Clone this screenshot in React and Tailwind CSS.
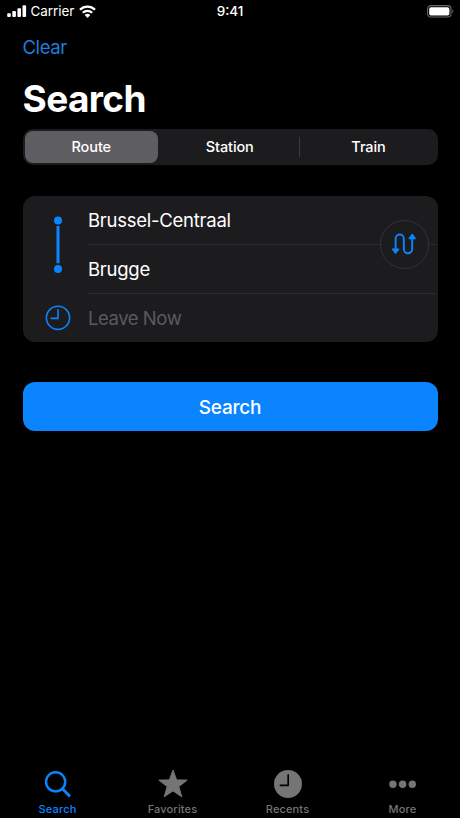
import { useState } from 'react'

const SEGMENTS = ['Route', 'Station', 'Train']

const SignalIcon = () => (
  <svg className="w-5 h-3" viewBox="0 0 20 12" fill="currentColor">
    <rect x="0.2" y="8.2" width="3.6" height="3.8" rx="0.9" />
    <rect x="5.3" y="6" width="3.6" height="6" rx="0.9" />
    <rect x="10.4" y="3.2" width="3.6" height="8.8" rx="0.9" />
    <rect x="15.5" y="0.2" width="3.6" height="11.8" rx="0.9" />
  </svg>
)

const WifiIcon = () => (
  <svg className="w-[17px] h-[13px]" viewBox="0 0 17 13" fill="none" stroke="currentColor" strokeWidth="2.3">
    <path d="M1 4.7a10.6 10.6 0 0 1 15 0" />
    <path d="M3.8 7.8a6.65 6.65 0 0 1 9.4 0" />
    <path d="M8.5 12.9L5.7 10a3.9 3.9 0 0 1 5.6 0z" fill="currentColor" stroke="none" />
  </svg>
)

const BatteryIcon = () => (
  <svg className="w-[27px] h-[13px]" viewBox="0 0 27 13" fill="none">
    <rect x="0.6" y="0.6" width="23.4" height="11.4" rx="3.2" stroke="#6b6b6b" strokeWidth="1.1" />
    <rect x="2.2" y="2.2" width="20.2" height="8.2" rx="1.7" fill="white" />
    <path d="M25.3 4.3c1.4.6 1.4 3.4 0 4z" fill="#6b6b6b" />
  </svg>
)

const RouteLine = () => (
  <svg className="w-[10px] h-[58px]" viewBox="0 0 10 58" fill="#0a84ff">
    <circle cx="5" cy="4.5" r="4" />
    <rect x="3.5" y="10" width="3" height="37.3" />
    <circle cx="5" cy="53" r="4" />
  </svg>
)

const ClockIcon = () => (
  <svg className="w-[26px] h-[26px]" viewBox="0 0 26 26" fill="none" stroke="#0a84ff" strokeWidth="1.6">
    <circle cx="13" cy="12.8" r="11.6" />
    <path d="M13 4.7v8.7H6.2" strokeLinecap="round" strokeLinejoin="round" />
  </svg>
)

const SwapIcon = () => (
  <svg className="w-6 h-[22px]" viewBox="0 0 24 22" fill="none" stroke="#0a84ff" strokeWidth="1.9">
    <path d="M3.6 17V5.6a4.1 4.1 0 0 1 8.2 0V16a4.2 4.2 0 0 0 8.4 0V5" />
    <path d="M.7 16.2h5.8l-2.9 3.9z" fill="#0a84ff" strokeWidth="1.5" strokeLinejoin="round" />
    <path d="M17.3 5.4h5.8l-2.9-3.9z" fill="#0a84ff" strokeWidth="1.5" strokeLinejoin="round" />
  </svg>
)

const SearchIcon = () => (
  <svg className="w-7 h-7" viewBox="0 0 28 28" fill="none" stroke="currentColor" strokeWidth="2.4">
    <circle cx="11.6" cy="11.8" r="9.6" />
    <path d="M18.7 19l6.4 6.6" strokeWidth="2.9" strokeLinecap="round" />
  </svg>
)

const StarIcon = () => (
  <svg className="w-[30px] h-7" viewBox="0 0 30 28" fill="currentColor" stroke="currentColor" strokeWidth="1" strokeLinejoin="round">
    <path d="M15 0l3.6 9.9 10.6.2-8.4 6.5 3 10.2L15 20.9l-8.8 5.9 3-10.2L.8 10.1l10.6-.2z" />
  </svg>
)

const RecentsIcon = () => (
  <svg className="w-7 h-7" viewBox="0 0 28 28" fill="none">
    <circle cx="14" cy="14" r="14" fill="currentColor" />
    <path d="M14.2 5v10.3H6.4" stroke="black" strokeWidth="1.7" strokeLinecap="round" strokeLinejoin="round" />
  </svg>
)

const MoreIcon = () => (
  <svg className="w-7 h-7" viewBox="0 0 28 28" fill="currentColor">
    <circle cx="3.9" cy="14.3" r="3.7" />
    <circle cx="13.6" cy="14.3" r="3.7" />
    <circle cx="23.3" cy="14.3" r="3.7" />
  </svg>
)

const TABS = [
  { label: 'Search', Icon: SearchIcon },
  { label: 'Favorites', Icon: StarIcon },
  { label: 'Recents', Icon: RecentsIcon },
  { label: 'More', Icon: MoreIcon },
]

const StatusBar = () => (
  <div className="grid grid-cols-3 items-center h-[22px] pl-[7px] pr-[6px] text-[13.5px] leading-none">
    <div className="flex items-center">
      <SignalIcon />
      <span className="ml-[3.5px] mr-[5px] pt-[2px] tracking-[-0.05px]">Carrier</span>
      <WifiIcon />
    </div>
    <span className="text-center font-medium pt-[2px] pr-px">9:41</span>
    <div className="flex justify-end">
      <BatteryIcon />
    </div>
  </div>
)

export default function App() {
  const [segment, setSegment] = useState('Route')
  const [tab, setTab] = useState('Search')

  return (
    <div className="flex flex-col h-[818px] w-[460px] bg-black text-white font-['Inter','Liberation_Sans',sans-serif] overflow-hidden">
      <StatusBar />

      <main className="flex flex-col flex-1 px-[22.5px]">
        <button className="self-start mt-[13px] h-6 text-[18.5px] leading-6 tracking-[-0.4px] text-[#1f7fdf]">Clear</button>
        <h1 className="mt-[17px] h-[46px] text-[37px] leading-[46px] font-bold tracking-[-0.6px]">Search</h1>

        {/* Segmented control */}
        <div className="flex gap-[2px] mt-[7px] h-[35.5px] p-[2px] rounded-[10px] bg-[#1c1c1e]">
          {SEGMENTS.map((name, i) => (
            <div key={name} className={`flex items-center gap-[2px] ${i < 2 ? 'w-[136.5px]' : 'flex-1'}`}>
              <button
                onClick={() => setSegment(name)}
                className={`flex-1 h-full rounded-[8px] text-[14.5px] font-medium tracking-[-0.1px] ${segment === name ? 'bg-[#5e5d62]' : ''}`}
              >
                {name}
              </button>
              {i < 2 && <span className={`w-px h-5 ${i === 1 ? 'bg-[#3a3a3d]' : ''}`} />}
            </div>
          ))}
        </div>

        {/* Journey form */}
        <div className="relative flex mt-[31px] h-[146.5px] rounded-[12px] bg-[#1c1c1e]">
          <div className="flex flex-col items-center w-[65.5px] pl-[5px] pt-[20px]">
            <RouteLine />
            <div className="mt-[31px]">
              <ClockIcon />
            </div>
          </div>
          <div className="flex flex-col flex-1 pr-[2px] text-[18.5px] tracking-[-0.25px]">
            <div className="flex items-center h-[49.5px] pt-[2px] border-b border-[#2c2c2e]">Brussel-Centraal</div>
            <div className="flex items-center h-[49px] pt-[2px] border-b border-[#2c2c2e]">Brugge</div>
            <div className="flex items-center h-12 pt-[2px] tracking-[-0.45px] text-[#5a5a5e]">Leave Now</div>
          </div>
          <button className="absolute right-[9px] top-[24px] flex items-center justify-center size-[49px] rounded-full border border-[#343436] bg-[#1c1c1e]">
            <SwapIcon />
          </button>
        </div>

        <button className="mt-[40px] h-[49px] pt-[3px] rounded-[12px] bg-[#0a84ff] text-[19px] font-medium tracking-[-0.25px]">Search</button>
      </main>

      <nav className="grid grid-cols-4 h-[48px]">
        {TABS.map(({ label, Icon }) => (
          <button
            key={label}
            onClick={() => setTab(label)}
            className={`flex flex-col items-center ${tab === label ? 'text-[#0a84ff]' : 'text-[#757575]'}`}
          >
            <Icon />
            <span className="mt-[4px] text-[11px] leading-[14px] font-medium tracking-[0.15px]">{label}</span>
          </button>
        ))}
      </nav>
    </div>
  )
}
